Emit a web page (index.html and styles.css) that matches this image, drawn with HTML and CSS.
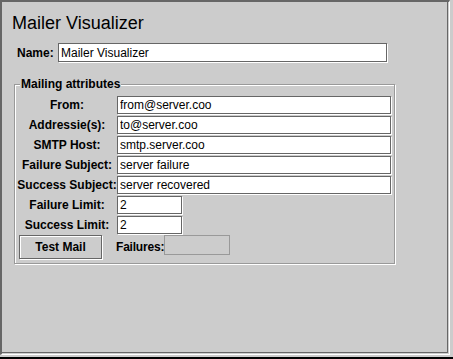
FILE: index.html
```html
<!DOCTYPE html>
<html lang="en">
<head>
  <meta charset="UTF-8">
  <title>Mailer Visualizer</title>
  <link rel="stylesheet" href="styles.css">
</head>
<body>
  <div class="window">
    <div class="frame">
      <div class="panel">
        <h1 class="title">Mailer Visualizer</h1>

        <div class="name-row">
          <label for="name">Name:</label>
          <input id="name" class="field name-field" value="Mailer Visualizer">
        </div>

        <fieldset class="group">
          <legend>Mailing attributes</legend>
          <div class="form-grid">
            <label>From:</label>
            <input class="field" value="from@server.coo">
            <label>Addressie(s):</label>
            <input class="field" value="to@server.coo">
            <label>SMTP Host:</label>
            <input class="field" value="smtp.server.coo">
            <label>Failure Subject:</label>
            <input class="field" value="server failure">
            <label>Success Subject:</label>
            <input class="field" value="server recovered">
            <label>Failure Limit:</label>
            <input class="field short" value="2">
            <label>Success Limit:</label>
            <input class="field short" value="2">
          </div>
          <div class="actions">
            <button class="btn">Test Mail</button>
            <span class="label">Failures:</span>
            <span class="status-box"></span>
          </div>
        </fieldset>
      </div>
    </div>
  </div>
</body>
</html>
```

FILE: styles.css
```css
* { box-sizing: border-box; }
body {
  margin: 0;
  font-family: "Liberation Sans", Arial, sans-serif;
  font-size: 12px;
  color: #000;
  background: #ccc;
}
.window {
  width: 453px;
  height: 359px;
  background: #ccc;
  border-bottom: 2px solid #000;
}
.frame {
  width: 450px;
  height: 355px;
  border-top: 2px solid #666;
  border-left: 2px solid #666;
  border-right: 1px solid #fff;
  border-bottom: 1px solid #fff;
}
.panel {
  width: 446px;
  height: 351px;
  border-right: 1px solid #666;
  border-bottom: 1px solid #666;
  padding: 11px 0 0 10px;
}
.title {
  margin: 0;
  font-size: 18px;
  font-weight: normal;
  line-height: 20px;
}
.name-row {
  display: flex;
  align-items: center;
  margin-top: 10px;
  padding-left: 5px;
}
.name-row label {
  width: 41px;
  font-weight: bold;
}
.field {
  height: 18px;
  margin: 0;
  padding: 0 2px;
  border: 1px solid #666;
  box-shadow: 1px 1px 0 #fff;
  background: #fff;
  font: 12px "Liberation Sans", Arial, sans-serif;
  color: #000;
  outline: none;
}
.name-field {
  width: 329px;
  height: 19px;
}
.group {
  width: 381px;
  margin: 15px 0 0 2px;
  padding: 5px 0 4px 2px;
  border: 1px solid #999;
  box-shadow: inset 1px 1px 0 #fff, 1px 1px 0 #fff;
}
.group legend {
  margin-left: 3px;
  padding: 0 1px;
  font-weight: bold;
  line-height: 14px;
  background: #ccc;
}
.form-grid {
  display: grid;
  grid-template-columns: 100px 274px;
  row-gap: 2px;
  align-items: center;
}
.form-grid label {
  font-weight: bold;
  text-align: center;
  white-space: nowrap;
}
.field.short {
  width: 65px;
}
.actions {
  display: flex;
  align-items: center;
  margin-top: 1px;
  padding-left: 2px;
}
.btn {
  width: 83px;
  height: 24px;
  margin: 0;
  padding: 0;
  border: 1px solid #666;
  box-shadow: inset 1px 1px 0 #fff, 1px 1px 0 #fff;
  background: #ccc;
  font: bold 12px "Liberation Sans", Arial, sans-serif;
  color: #000;
}
.actions .label {
  margin-left: 14px;
  font-weight: bold;
  letter-spacing: -0.2px;
}
.status-box {
  align-self: flex-start;
  width: 66px;
  height: 20px;
  border: 1px solid #999;
}
```
